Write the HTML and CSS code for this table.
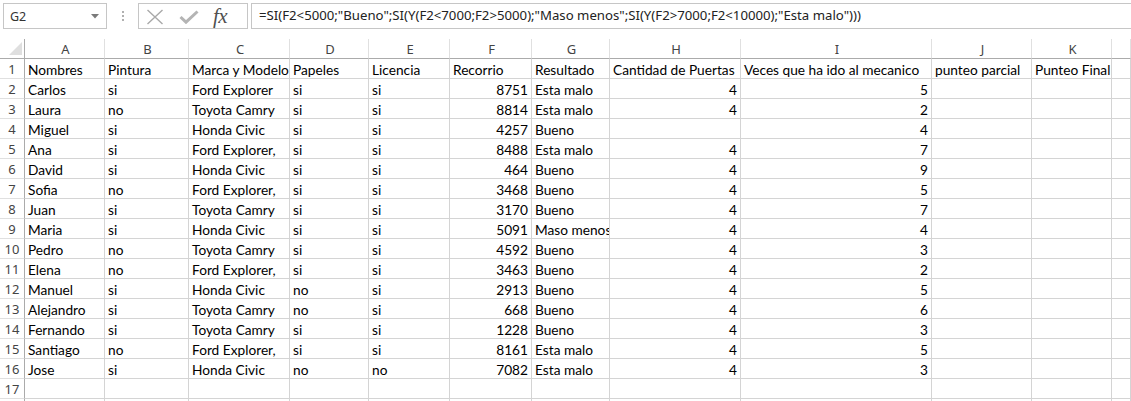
FILE: index.html
```html
<!DOCTYPE html>
<html lang="es">
<head>
<meta charset="utf-8">
<title>Hoja de cálculo</title>
<link rel="stylesheet" href="styles.css">
</head>
<body>
<div class="app">
  <div class="formula-bar">
    <div class="name-box">
      <span class="name-text">G2</span>
      <svg class="dd" width="8" height="5" viewBox="0 0 8 5"><polygon points="0,0 8,0 4,4.5" fill="#7a7a7a"/></svg>
    </div>
    <div class="grip"><span></span><span></span><span></span></div>
    <div class="fx-buttons">
      <svg class="ic-x" width="18" height="16" viewBox="0 0 18 16"><path d="M1.5 1 L16.5 15 M16.5 1 L1.5 15" stroke="#a9a9a9" stroke-width="1.4" fill="none"/></svg>
      <svg class="ic-check" width="20" height="14" viewBox="0 0 20 14"><path d="M1.5 7 L7 12.2 L18.5 1.5" stroke="#b4b4b4" stroke-width="3" fill="none" stroke-linejoin="miter"/></svg>
      <span class="fx">fx</span>
    </div>
    <div class="formula">=SI(F2&lt;5000;"Bueno";SI(Y(F2&lt;7000;F2&gt;5000);"Maso menos";SI(Y(F2&gt;7000;F2&lt;10000);"Esta malo")))</div>
  </div>

  <div class="sheet">
    <div class="row head">
      <div class="c rh corner"><svg width="13" height="13" viewBox="0 0 13 13"><polygon points="13,0 13,13 0,13" fill="#dfdfdf"/></svg></div>
      <div class="c ch">A</div><div class="c ch">B</div><div class="c ch">C</div><div class="c ch">D</div><div class="c ch">E</div><div class="c ch">F</div><div class="c ch">G</div><div class="c ch">H</div><div class="c ch">I</div><div class="c ch">J</div><div class="c ch">K</div><div class="c ch"></div>
    </div>
    <div class="row"><div class="c rh">1</div><div class="c">Nombres</div><div class="c">Pintura</div><div class="c">Marca y Modelo</div><div class="c">Papeles</div><div class="c">Licencia</div><div class="c">Recorrio</div><div class="c">Resultado</div><div class="c">Cantidad de Puertas</div><div class="c">Veces que ha ido al mecanico</div><div class="c">punteo parcial</div><div class="c">Punteo Final</div><div class="c"></div></div>
    <div class="row"><div class="c rh">2</div><div class="c">Carlos</div><div class="c">si</div><div class="c">Ford Explorer</div><div class="c">si</div><div class="c">si</div><div class="c n">8751</div><div class="c">Esta malo</div><div class="c n">4</div><div class="c n">5</div><div class="c"></div><div class="c"></div><div class="c"></div></div>
    <div class="row"><div class="c rh">3</div><div class="c">Laura</div><div class="c">no</div><div class="c">Toyota Camry</div><div class="c">si</div><div class="c">si</div><div class="c n">8814</div><div class="c">Esta malo</div><div class="c n">4</div><div class="c n">2</div><div class="c"></div><div class="c"></div><div class="c"></div></div>
    <div class="row"><div class="c rh">4</div><div class="c">Miguel</div><div class="c">si</div><div class="c">Honda Civic</div><div class="c">si</div><div class="c">si</div><div class="c n">4257</div><div class="c">Bueno</div><div class="c n"></div><div class="c n">4</div><div class="c"></div><div class="c"></div><div class="c"></div></div>
    <div class="row"><div class="c rh">5</div><div class="c">Ana</div><div class="c">si</div><div class="c">Ford Explorer,</div><div class="c">si</div><div class="c">si</div><div class="c n">8488</div><div class="c">Esta malo</div><div class="c n">4</div><div class="c n">7</div><div class="c"></div><div class="c"></div><div class="c"></div></div>
    <div class="row"><div class="c rh">6</div><div class="c">David</div><div class="c">si</div><div class="c">Honda Civic</div><div class="c">si</div><div class="c">si</div><div class="c n">464</div><div class="c">Bueno</div><div class="c n">4</div><div class="c n">9</div><div class="c"></div><div class="c"></div><div class="c"></div></div>
    <div class="row"><div class="c rh">7</div><div class="c">Sofia</div><div class="c">no</div><div class="c">Ford Explorer,</div><div class="c">si</div><div class="c">si</div><div class="c n">3468</div><div class="c">Bueno</div><div class="c n">4</div><div class="c n">5</div><div class="c"></div><div class="c"></div><div class="c"></div></div>
    <div class="row"><div class="c rh">8</div><div class="c">Juan</div><div class="c">si</div><div class="c">Toyota Camry</div><div class="c">si</div><div class="c">si</div><div class="c n">3170</div><div class="c">Bueno</div><div class="c n">4</div><div class="c n">7</div><div class="c"></div><div class="c"></div><div class="c"></div></div>
    <div class="row"><div class="c rh">9</div><div class="c">Maria</div><div class="c">si</div><div class="c">Honda Civic</div><div class="c">si</div><div class="c">si</div><div class="c n">5091</div><div class="c">Maso menos</div><div class="c n">4</div><div class="c n">4</div><div class="c"></div><div class="c"></div><div class="c"></div></div>
    <div class="row"><div class="c rh">10</div><div class="c">Pedro</div><div class="c">no</div><div class="c">Toyota Camry</div><div class="c">si</div><div class="c">si</div><div class="c n">4592</div><div class="c">Bueno</div><div class="c n">4</div><div class="c n">3</div><div class="c"></div><div class="c"></div><div class="c"></div></div>
    <div class="row"><div class="c rh">11</div><div class="c">Elena</div><div class="c">no</div><div class="c">Ford Explorer,</div><div class="c">si</div><div class="c">si</div><div class="c n">3463</div><div class="c">Bueno</div><div class="c n">4</div><div class="c n">2</div><div class="c"></div><div class="c"></div><div class="c"></div></div>
    <div class="row"><div class="c rh">12</div><div class="c">Manuel</div><div class="c">si</div><div class="c">Honda Civic</div><div class="c">no</div><div class="c">si</div><div class="c n">2913</div><div class="c">Bueno</div><div class="c n">4</div><div class="c n">5</div><div class="c"></div><div class="c"></div><div class="c"></div></div>
    <div class="row"><div class="c rh">13</div><div class="c">Alejandro</div><div class="c">si</div><div class="c">Toyota Camry</div><div class="c">no</div><div class="c">si</div><div class="c n">668</div><div class="c">Bueno</div><div class="c n">4</div><div class="c n">6</div><div class="c"></div><div class="c"></div><div class="c"></div></div>
    <div class="row"><div class="c rh">14</div><div class="c">Fernando</div><div class="c">si</div><div class="c">Toyota Camry</div><div class="c">si</div><div class="c">si</div><div class="c n">1228</div><div class="c">Bueno</div><div class="c n">4</div><div class="c n">3</div><div class="c"></div><div class="c"></div><div class="c"></div></div>
    <div class="row"><div class="c rh">15</div><div class="c">Santiago</div><div class="c">no</div><div class="c">Ford Explorer,</div><div class="c">si</div><div class="c">si</div><div class="c n">8161</div><div class="c">Esta malo</div><div class="c n">4</div><div class="c n">5</div><div class="c"></div><div class="c"></div><div class="c"></div></div>
    <div class="row"><div class="c rh">16</div><div class="c">Jose</div><div class="c">si</div><div class="c">Honda Civic</div><div class="c">no</div><div class="c">no</div><div class="c n">7082</div><div class="c">Esta malo</div><div class="c n">4</div><div class="c n">3</div><div class="c"></div><div class="c"></div><div class="c"></div></div>
    <div class="row"><div class="c rh">17</div><div class="c"></div><div class="c"></div><div class="c"></div><div class="c"></div><div class="c"></div><div class="c"></div><div class="c"></div><div class="c"></div><div class="c"></div><div class="c"></div><div class="c"></div><div class="c"></div></div>
    <div class="row"><div class="c rh"></div><div class="c"></div><div class="c"></div><div class="c"></div><div class="c"></div><div class="c"></div><div class="c"></div><div class="c"></div><div class="c"></div><div class="c"></div><div class="c"></div><div class="c"></div><div class="c"></div></div>
  </div>
</div>
</body>
</html>
```

FILE: styles.css
```css
html, body {
  margin: 0;
  padding: 0;
  background: #ffffff;
  overflow: hidden;
}

.app {
  width: 1131px;
  height: 401px;
  overflow: hidden;
}

/* ---------- formula bar ---------- */
.formula-bar {
  height: 39px;
  box-sizing: border-box;
  padding-top: 3px;
  display: flex;
  align-items: flex-start;
}

.name-box {
  margin-left: 3px;
  width: 104px;
  height: 26px;
  box-sizing: border-box;
  border: 1px solid #c6c6c6;
  display: flex;
  align-items: center;
  justify-content: space-between;
  padding: 0 7px 0 6px;
  font-family: "Noto Sans", "DejaVu Sans", sans-serif;
  font-size: 12.5px;
  color: #333333;
}

.name-text { padding-top: 1px; }

.grip {
  width: 31px;
  height: 26px;
  display: flex;
  flex-direction: column;
  align-items: center;
  justify-content: center;
  gap: 2px;
}
.grip span {
  width: 2px;
  height: 2px;
  background: #b0b0b0;
}

.fx-buttons {
  width: 110px;
  height: 26px;
  box-sizing: border-box;
  border: 1px solid #c6c6c6;
  display: flex;
  align-items: center;
  padding-left: 7px;
}
.ic-x { margin-top: 1px; }
.ic-check { margin-left: 15px; margin-top: 2px; }
.fx {
  margin-left: 14px;
  font-family: "Liberation Serif", "DejaVu Serif", serif;
  font-style: italic;
  font-size: 21px;
  color: #505050;
  line-height: 24px;
  letter-spacing: -0.5px;
}

.formula {
  margin-left: 3px;
  flex: 1;
  height: 26px;
  box-sizing: border-box;
  border: 1px solid #c6c6c6;
  border-right: none;
  padding: 0 0 0 7px;
  font-family: "Noto Sans", "DejaVu Sans", sans-serif;
  font-size: 13.2px;
  line-height: 23px;
  color: #222222;
  white-space: nowrap;
  overflow: hidden;
}

/* ---------- sheet ---------- */
.row {
  display: grid;
  grid-template-columns: 25px 80px 84px 101px 79px 81px 82px 78px 131px 191px 100px 80px 1fr;
  height: 20px;
}

.c {
  box-sizing: border-box;
  height: 20px;
  border-right: 1px solid #d4d4d4;
  border-bottom: 1px solid #d4d4d4;
  padding: 0 1px 0 3px;
  font-family: Lato, "Liberation Sans", sans-serif;
  font-size: 13.7px;
  line-height: 21px;
  color: #000000;
  white-space: nowrap;
  overflow: hidden;
}

.c.n { text-align: right; padding-right: 3px; }

.head .c { border-bottom-color: #ababab; }

.ch {
  border-right-color: #e0e0e0;
  text-align: center;
  font-family: "Noto Sans", "DejaVu Sans", sans-serif;
  font-size: 13px;
  line-height: 20px;
  color: #444444;
}

.rh {
  border-right-color: #ababab;
  border-bottom-color: #e0e0e0;
  text-align: center;
  padding: 0;
  font-family: "Noto Sans", "DejaVu Sans", sans-serif;
  font-size: 13px;
  line-height: 21px;
  color: #444444;
}

.corner {
  display: flex;
  align-items: flex-end;
  justify-content: flex-end;
  padding: 0 2px 3px 0;
}
```
